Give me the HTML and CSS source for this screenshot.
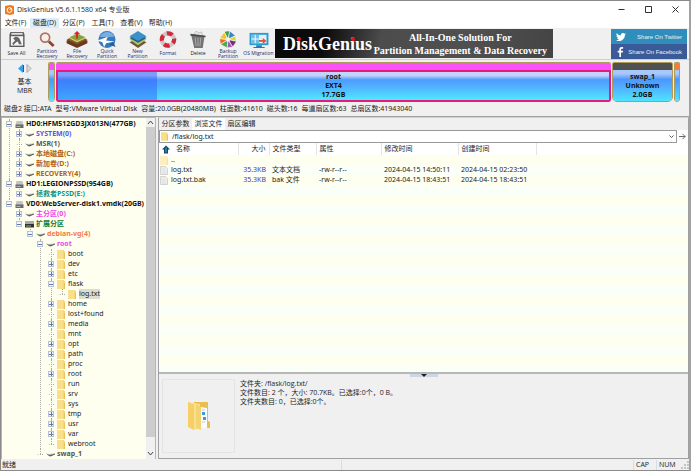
FILE: index.html
```html
<!DOCTYPE html>
<html lang="zh-CN">
<head>
<meta charset="utf-8">
<title>DiskGenius V5.6.1.1580 x64 专业版</title>
<link rel="stylesheet" href="styles.css">
</head>
<body>
<svg class="defs" aria-hidden="true">
  <symbol id="folder" viewBox="0 0 8 9"><path d="M0 0h7v1h1v8H0z" fill="#f3d678"/><path d="M0 0h6v9H0z" fill="#f9df8b"/><path d="M7 3h1v6H7z" fill="#e8c25c"/></symbol>
  <symbol id="drive" viewBox="0 0 9 9"><path d="M1.500 1h6l1 4h-8z" fill="#c4c4c4"/><path d="M.5 4.500h8V8h-8z" fill="#6a6a6a"/><path d="M1.500 6.500h4" stroke="#ccc" stroke-width=".8"/></symbol>
  <symbol id="ext" viewBox="0 0 9 9"><path d="M0 1h9v4H0z" fill="#aaa"/><path d="M0 4h9v3.500H0z" fill="#333"/><path d="M1 6h5" stroke="#9c9" stroke-width=".8"/></symbol>
  <symbol id="part" viewBox="0 0 9 9"><path d="M0 3.500l2.500.5L9 3.500 4.500 5.500z" fill="#b8b8b8"/><path d="M0 3.500l4 1.700 5-1.700v1L4.500 6.500l-1.500-.5z" fill="#5a5a5a"/></symbol>
  <symbol id="page" viewBox="0 0 8 9"><path d="M.5.5h5l2 2v6h-7z" fill="#eee" stroke="#c4c4c4" stroke-width=".7"/><path d="M2 3h3M2 5h4M2 7h4" stroke="#ccc" stroke-width=".5"/></symbol>
</svg>
<div class="window">
  <header class="titlebar">
    <svg class="logo" viewBox="0 0 9 10"><path d="M0 1l5-1 4 1v8l-4 1-5-1z" fill="#f07a22"/><circle cx="4.500" cy="5" r="2.400" fill="none" stroke="#fff"/><path d="M4.500 5l2-2" stroke="#fff"/></svg>
    <h1>DiskGenius V5.6.1.1580 x64 专业版</h1>
    <div class="winbtns">
      <button aria-label="最小化"><svg viewBox="0 0 7 7"><path d="M.5 3.500h6"/></svg></button>
      <button aria-label="最大化"><svg viewBox="0 0 7 7"><path d="M.5.5h6v6h-6z"/></svg></button>
      <button aria-label="关闭"><svg viewBox="0 0 7 7"><path d="M.5.5l6 6M6.500.5l-6 6"/></svg></button>
    </div>
  </header>
  <nav class="menu">
    <button>文件(F)</button><button class="hover">磁盘(D)</button><button>分区(P)</button><button>工具(T)</button><button>查看(V)</button><button>帮助(H)</button>
  </nav>
  <div class="toolbar">
    <button class="tool plain"><svg viewBox="0 0 22 18"><path d="M4 1h14l1 3v13H3V4z" fill="#5c5c5c"/><path d="M5 2h12v2H5z" fill="#ddd"/><path d="M4.500 5.500h13v10h-13z" fill="#f4f4f4"/><path d="M7 8c2-3 6-2 7 1l2 5h-3l-1-3-2 1-3 3-1-2 3-3z" fill="#666"/></svg><span>Save All</span></button>
    <button class="tool"><svg viewBox="0 0 22 18"><circle cx="9" cy="7" r="4.800" fill="#f6eeea" stroke="#ad7562" stroke-width="1.800"/><path d="M13 11l5 5" stroke="#8b4532" stroke-width="3"/></svg><span>Partition<br>Recovery</span></button>
    <button class="tool"><svg viewBox="0 0 22 18"><path d="M0 10l11-4 11 4v3l-11 5-11-5z" fill="#68391c"/><path d="M0 9l11-5 11 5-11 5z" fill="#8a5529"/><path d="M3 8l8-4 9 4-9 4z" fill="#d5d56a"/><path d="M3 6.500L11 3l9 3.500-9 4z" fill="#80a440"/><path d="M11 8V2" stroke="#e1221c" stroke-width="2"/><path d="M7.500 3.500L11 0l3.500 3.500z" fill="#e1221c"/></svg><span>File<br>Recovery</span></button>
    <button class="tool"><svg viewBox="0 0 22 18"><circle cx="11" cy="9" r="9" fill="#3779bd"/><path d="M3 6c4-6 12-7 16 0-5 0-8 1-16 0z" fill="#77afe0"/><path d="M1 10l11-4-2 4 9 1-9 2-2 4-2-5z" fill="#fff"/><path d="M13 14l7 3-2-5z" fill="#285c9e"/></svg><span>Quick<br>Partition</span></button>
    <button class="tool"><svg viewBox="0 0 22 18"><path d="M2 12l9-4 9 4-9 6z" fill="#77523a"/><path d="M2 9l9-4 9 4-9 6z" fill="#a8ca62"/><path d="M2 7.500l9-5 9 5-9 5z" fill="#285b83"/><path d="M2 5.500L11 0l9 5.500-9 5z" fill="#3d91c9"/></svg><span>New<br>Partition</span></button>
    <button class="tool"><svg viewBox="0 0 22 18"><circle cx="11" cy="9" r="6.500" fill="none" stroke="#c8c8cb" stroke-width="4.500"/><circle cx="11" cy="9" r="6.500" fill="none" stroke="#d42a36" stroke-width="4.500" stroke-dasharray="6.100 4.110" stroke-dashoffset="2"/></svg><span>Format</span></button>
    <button class="tool plain"><svg viewBox="0 0 22 18"><path d="M6 4l3-4 3 2 3-1 1 4z" fill="#e5e5e5" stroke="#999" stroke-width=".5"/><path d="M4 5h14l-2 13H7z" fill="#747474"/><path d="M3 3l16 2v1.500L3 5z" fill="#4c4c4c"/><path d="M8 7l1 9M11 7v9M14 7l-1 9" stroke="#bbb" stroke-width=".8"/></svg><span>Delete</span></button>
    <button class="tool"><svg viewBox="0 0 22 18"><g stroke="#fff" stroke-width=".6"><path d="M11 9L7 1a9 9 0 0 1 6-1z" fill="#46a04a"/><path d="M11 9l2-9 6 5z" fill="#3d85c8"/><path d="M11 9l8-4 1 6z" fill="#d7db36"/><path d="M11 9l9 2-4 6z" fill="#71317f"/><path d="M11 9l5 8-6 1z" fill="#a55bb0"/><path d="M11 9l-1 9-7-4z" fill="#4fa956"/><path d="M11 9l-8 5-1-6z" fill="#e46c2e"/><path d="M11 9L2 8l5-7z" fill="#f1c52f"/></g><circle cx="11" cy="9" r="2.300" fill="#f2f2f2"/></svg><span>Backup<br>Partition</span></button>
    <button class="tool"><svg viewBox="0 0 22 18"><path d="M1 2h20v13H1z" fill="#299cd2"/><path d="M3 4h16v9H3z" fill="#dff0f9"/><path d="M3 4h8v9H3z" fill="#6ebee5"/><path d="M7 4v9M3 8.500h8" stroke="#fff"/><path d="M11 9.500h4v-2l4 3-4 3v-2h-4z" fill="#e5502f"/><path d="M8 15h6v2H8zM5 17h12v1H5z" fill="#247fae"/></svg><span>OS Migration</span></button>
    <div class="banner">
      <strong>D<i>i</i>skGen<i>i</i>us</strong>
      <p>All-In-One Solution For<br>Partition Management &amp; Data Recovery</p>
    </div>
    <div class="share">
      <a href="#twitter"><svg viewBox="0 0 24 24"><path fill="#fff" d="M24 4.600a10 10 0 0 1-2.800.8 5 5 0 0 0 2.100-2.700 10 10 0 0 1-3.100 1.200 4.900 4.900 0 0 0-8.400 4.500A14 14 0 0 1 1.700 3.200a4.900 4.900 0 0 0 1.500 6.500 5 5 0 0 1-2.200-.6 4.900 4.900 0 0 0 3.900 4.900 5 5 0 0 1-2.200.1 4.900 4.900 0 0 0 4.600 3.400A10 10 0 0 1 0 19.500 14 14 0 0 0 21.500 7.100 10 10 0 0 0 24 4.600z"/></svg><span>Share On Twitter</span></a>
      <a href="#facebook" class="fb"><svg viewBox="0 0 24 24"><path fill="#fff" d="M8 24V13H4V9h4V6c0-4 2-6 6-6h3v4h-2c-2 0-3 .6-3 2.500V9h5l-.6 4H12v11z"/></svg><span>Share On Facebook</span></a>
    </div>
  </div>
  <section class="disk">
    <div class="mode">
      <svg viewBox="0 0 14 9"><path d="M5 0v9L0 4.500z" fill="#3ba0e8"/><path d="M5.500 1v7" stroke="#1b5f9c"/><path d="M9 .5v8l4-4z" fill="#ddd" stroke="#999" stroke-width=".8"/></svg>
      <span>基本</span><span>MBR</span>
    </div>
    <div class="parts">
      <div class="vol tiny"><i></i><b></b></div>
      <div class="vol root"><i></i><b>root<br>EXT4<br>17.7GB</b></div>
      <div class="vol swap"><i></i><b>swap_1<br>Unknown<br>2.0GB</b></div>
      <div class="vol tiny free"><i></i><b></b></div>
    </div>
  </section>
  <p class="info"><span>磁盘2 接口:ATA</span><span>型号:VMware Virtual Disk</span><span>容量:20.0GB(20480MB)</span><span>柱面数:41610</span><span>磁头数:16</span><span>每道扇区数:63</span><span>总扇区数:41943040</span></p>
  <main class="main">
    <aside class="side">
      <ul class="tree">
        <li><div class="row k"><button class="ex open" aria-label="折叠"></button><svg><use href="#drive"/></svg><span>HD0:HFM512GD3JX013N(477GB)</span></div>
          <ul>
            <li><div class="row blue"><button class="ex" aria-label="展开"></button><svg><use href="#part"/></svg><span>SYSTEM(0)</span></div></li>
            <li><div class="row grey"><em></em><svg><use href="#part"/></svg><span>MSR(1)</span></div></li>
            <li><div class="row brown"><button class="ex" aria-label="展开"></button><svg><use href="#part"/></svg><span>本地磁盘(C:)</span></div></li>
            <li><div class="row brown"><button class="ex" aria-label="展开"></button><svg><use href="#part"/></svg><span>新加卷(D:)</span></div></li>
            <li><div class="row brown"><button class="ex" aria-label="展开"></button><svg><use href="#part"/></svg><span>RECOVERY(4)</span></div></li>
          </ul></li>
        <li><div class="row k"><button class="ex open" aria-label="折叠"></button><svg><use href="#drive"/></svg><span>HD1:LEGIONPSSD(954GB)</span></div>
          <ul><li><div class="row teal"><button class="ex" aria-label="展开"></button><svg><use href="#part"/></svg><span>拯救者PSSD(E:)</span></div></li></ul></li>
        <li><div class="row k"><button class="ex open" aria-label="折叠"></button><svg><use href="#drive"/></svg><span>VD0:WebServer-disk1.vmdk(20GB)</span></div>
          <ul>
            <li><div class="row pink"><button class="ex" aria-label="展开"></button><svg><use href="#part"/></svg><span>主分区(0)</span></div></li>
            <li><div class="row green"><button class="ex open" aria-label="折叠"></button><svg><use href="#ext"/></svg><span>扩展分区</span></div>
              <ul><li><div class="row orange"><button class="ex open" aria-label="折叠"></button><svg><use href="#part"/></svg><span>debian-vg(4)</span></div>
                <ul>
                  <li><div class="row pink"><button class="ex open" aria-label="折叠"></button><svg><use href="#part"/></svg><span>root</span></div>
                    <ul class="dirs">
                      <li><div class="row"><em></em><svg><use href="#folder"/></svg><span>boot</span></div></li>
                      <li><div class="row"><button class="ex" aria-label="展开"></button><svg><use href="#folder"/></svg><span>dev</span></div></li>
                      <li><div class="row"><button class="ex" aria-label="展开"></button><svg><use href="#folder"/></svg><span>etc</span></div></li>
                      <li><div class="row"><button class="ex open" aria-label="折叠"></button><svg><use href="#folder"/></svg><span>flask</span></div>
                        <ul><li><div class="row"><em></em><svg><use href="#folder"/></svg><span class="sel">log.txt</span></div></li></ul></li>
                      <li><div class="row"><button class="ex" aria-label="展开"></button><svg><use href="#folder"/></svg><span>home</span></div></li>
                      <li><div class="row"><em></em><svg><use href="#folder"/></svg><span>lost+found</span></div></li>
                      <li><div class="row"><button class="ex" aria-label="展开"></button><svg><use href="#folder"/></svg><span>media</span></div></li>
                      <li><div class="row"><em></em><svg><use href="#folder"/></svg><span>mnt</span></div></li>
                      <li><div class="row"><button class="ex" aria-label="展开"></button><svg><use href="#folder"/></svg><span>opt</span></div></li>
                      <li><div class="row"><button class="ex" aria-label="展开"></button><svg><use href="#folder"/></svg><span>path</span></div></li>
                      <li><div class="row"><em></em><svg><use href="#folder"/></svg><span>proc</span></div></li>
                      <li><div class="row"><button class="ex" aria-label="展开"></button><svg><use href="#folder"/></svg><span>root</span></div></li>
                      <li><div class="row"><em></em><svg><use href="#folder"/></svg><span>run</span></div></li>
                      <li><div class="row"><em></em><svg><use href="#folder"/></svg><span>srv</span></div></li>
                      <li><div class="row"><em></em><svg><use href="#folder"/></svg><span>sys</span></div></li>
                      <li><div class="row"><button class="ex" aria-label="展开"></button><svg><use href="#folder"/></svg><span>tmp</span></div></li>
                      <li><div class="row"><button class="ex" aria-label="展开"></button><svg><use href="#folder"/></svg><span>usr</span></div></li>
                      <li><div class="row"><button class="ex" aria-label="展开"></button><svg><use href="#folder"/></svg><span>var</span></div></li>
                      <li><div class="row"><em></em><svg><use href="#folder"/></svg><span>webroot</span></div></li>
                    </ul></li>
                  <li><div class="row grey"><em></em><svg><use href="#part"/></svg><span>swap_1</span></div></li>
                </ul></li></ul></li>
          </ul></li>
      </ul>
      <div class="scroll">
        <button aria-label="向上"><svg viewBox="0 0 7 7"><path d="M1 5l2.500-3L6 5"/></svg></button>
        <div class="thumb"></div>
        <button aria-label="向下"><svg viewBox="0 0 7 7"><path d="M1 2l2.500 3L6 2"/></svg></button>
      </div>
    </aside>
    <section class="content">
      <div class="tabs"><button>分区参数</button><button class="on">浏览文件</button><button>扇区编辑</button></div>
      <div class="address">
        <div class="field">
          <svg class="f"><use href="#folder"/></svg>
          <input type="text" aria-label="路径" value="/flask/log.txt">
          <svg class="chev" viewBox="0 0 7 7"><path d="M1.500 2.500l2 2 2-2"/></svg>
        </div>
        <button aria-label="转到"><svg viewBox="0 0 8 8"><path d="M0 4h7M4 1l3 3-3 3"/></svg></button>
      </div>
      <div class="list">
        <table>
          <colgroup><col class="c1"><col class="c2"><col class="c3"><col class="c4"><col class="c5"><col class="c6"><col></colgroup>
          <thead><tr><th><div class="cell"><svg viewBox="0 0 8 8"><path d="M4 0l4 4H6v4H2V4H0z" fill="#14445f"/><path d="M4 2v5" stroke="#49b5e8"/></svg><span class="nm">名称</span></div></th><th class="num">大小</th><th>文件类型</th><th>属性</th><th>修改时间</th><th>创建时间</th><th class="end"></th></tr></thead>
          <tbody>
            <tr><td><div class="cell"><svg class="dim"><use href="#folder"/></svg>..</div></td><td></td><td></td><td></td><td></td><td></td><td></td></tr>
            <tr><td><div class="cell"><svg><use href="#page"/></svg>log.txt</div></td><td class="num">35.3KB</td><td>文本文档</td><td>-rw-r--r--</td><td>2024-04-15 14:50:11</td><td>2024-04-15 02:23:50</td><td></td></tr>
            <tr><td><div class="cell"><svg><use href="#page"/></svg>log.txt.bak</div></td><td class="num">35.3KB</td><td>bak 文件</td><td>-rw-r--r--</td><td>2024-04-15 18:43:51</td><td>2024-04-15 18:43:51</td><td></td></tr>
          </tbody>
        </table>
      </div>
      <div class="details">
        <button class="grip" aria-label="收起"></button>
        <div class="preview"><svg viewBox="0 0 22 28"><path d="M6 0h14v19l2 1v6H6z" fill="#e9bd4e"/><path d="M13 5l6 1v20h-7z" fill="#fbfbfb"/><path d="M14 10h3v3h-3zM15 15h3v3h-3z" fill="#3c9bd8"/><path d="M14 8h3M14 20h3" stroke="#aaa" stroke-width=".6"/><path d="M0 0l12 2v24l-6 2-6-3z" fill="#fbe08b"/><path d="M0 0l6 3v25l-6-3z" fill="#f6cf66"/><path d="M8 2l5 3v23l-5-2z" fill="#f3d474"/></svg></div>
        <p>文件夹: /flask/log.txt/<br>文件数目: 2 个，大小: 70.7KB。已选择:0个，0 B。<br>文件夹数目: 0，已选择:0个。</p>
      </div>
    </section>
  </main>
  <footer class="status"><span class="ready">就绪</span><span class="mid"></span><span class="key">CAP</span><span class="key">NUM</span><svg viewBox="0 0 8 8"><path d="M6 0h2v2H6zM3 3h2v2H3zM6 3h2v2H6zM0 6h2v2H0zM3 6h2v2H3zM6 6h2v2H6z" fill="#c4c4c4"/></svg></footer>
</div>
</body>
</html>
```
FILE: styles.css
```css
* { box-sizing: border-box; }
body { margin: 0; font: 7px/10px "Open Sans", "Noto Sans CJK SC", sans-serif; color: #1c1c1c; background: #f0f0f0; }
button, input { font: inherit; color: inherit; border: 0; padding: 0; background: none; }
h1, p, ul { margin: 0; padding: 0; font: inherit; }
ul { list-style: none; }
svg { display: block; flex: none; }
.defs { position: absolute; width: 0; height: 0; }
.window { height: 100vh; display: flex; flex-direction: column; overflow: hidden; border: 1px solid #8a8a8a; border-right: 2px solid #a2a2a2; white-space: nowrap; }

.titlebar { height: 17px; flex: none; background: #fff; display: flex; align-items: center; padding-left: 4px; gap: 3px; }
.titlebar h1 { flex: 1; }
.logo { width: 9px; height: 10px; }
.winbtns { display: flex; }
.winbtns button { width: 27px; height: 16px; display: grid; place-items: center; }
.winbtns svg { width: 7px; height: 7px; fill: none; stroke: #333; stroke-width: 1; }

.menu { height: 10px; flex: none; background: #fff; display: flex; }
.menu button { min-width: 29px; height: 10px; }
.menu .hover { background: #dcedf9; }

.toolbar { height: 32px; flex: none; display: flex; border-bottom: 1px solid #cfcfcf; padding-top: 1px; }
.tool { width: 30px; display: flex; flex-direction: column; align-items: center; padding-top: 2px; font: 5px/5px "Open Sans", sans-serif; color: #1b2f6b; }
.tool:nth-child(4n+1) { width: 31px; }
.tool svg { width: 22px; height: 17px; }
.tool.plain { color: #222; }
.tool span { flex: 1; display: flex; flex-direction: column; justify-content: center; }
.banner { width: 278px; height: 29px; margin-left: 1px; padding: 0 6px 0 8px; display: flex; align-items: center; justify-content: space-between; color: #fff; background: linear-gradient(100deg, #0b0b0b 18%, #4c4c4c 38%, #505050 70%, #444); font-family: "Liberation Serif", serif; font-weight: bold; }
.banner strong { font-size: 18px; line-height: 28px; }
.banner i { font-style: normal; position: relative; }
.banner i::before { content: ""; position: absolute; left: 1px; top: 3px; width: 4px; height: 4px; border-radius: 2px; background: #e8121a; }
.banner p { font-size: 10px; line-height: 13px; text-align: center; }
.share { width: 76px; margin: 0 2px 0 auto; color: #fff; font-family: "Liberation Sans", sans-serif; }
.share a { height: 15px; padding: 0 5px; display: flex; align-items: center; justify-content: space-between; background: #2f8ebc; color: #e6f2fa; text-decoration: none; font-size: 6px; }
.share .fb { background: #3a5a98; }
.share svg { width: 10px; height: 10px; }

.disk { height: 43px; flex: none; display: flex; padding: 2px 9px 0 0; }
.mode { width: 47px; display: flex; flex-direction: column; align-items: center; padding-top: 2px; line-height: 9px; }
.mode svg { width: 14px; height: 9px; margin-bottom: 4px; }
.parts { flex: 1; height: 40px; display: flex; gap: 1px; min-width: 0; }
.vol { border: 1px solid #b09a5a; border-radius: 2px 2px 5px 5px; overflow: hidden; display: flex; flex-direction: column; }
.vol i { height: 7px; flex: none; background: #fb52f7; }
.vol b { flex: 1; text-align: center; line-height: 9px; padding-top: 2px; color: #111; background: linear-gradient(#a9c8fa 0 12%, #4d97fd 30%, #50a8ff 50%, #4ee4ff); }
.tiny { width: 7px; flex: none; }
.root { flex: 1; border-radius: 2px; border-width: 1px 0 0; }
.root b { border: 2px solid #e8197c; border-radius: 0 0 2px 2px; padding-top: 0; background: linear-gradient(90deg, rgba(40, 90, 250, .45) 18%, transparent 18%), linear-gradient(#c3d4fa 0 12%, #4d9cfd 28%, #50aeff 50%, #4ee9ff); }
.swap { width: 61px; flex: none; }
.swap i { background: #505050; }
.free { width: 6px; }
.free i { background: #f87a3c; }

.info { height: 13px; flex: none; padding: 1px 3px 0; display: flex; gap: 4px; font-family: "Noto Sans", "Noto Sans CJK SC", sans-serif; }

.main { flex: 1; min-height: 0; display: flex; gap: 2px; border-top: 1px solid #a0a0a0; font-family: "Noto Sans", "Noto Sans CJK SC", sans-serif; }
.side { width: 155px; flex: none; display: flex; background: #fffff0; border: 1px solid #b5b5b5; border-width: 1px 1px 0; }
.tree { flex: 1; min-width: 0; overflow: hidden; padding: 1px 0 0 4px; }
.tree ul { padding-left: 10px; }
.tree ul ul { padding-left: 11px; }
.tree ul ul ul { padding-left: 10px; }
.tree ul ul ul ul { padding-left: 11px; }
.tree li { position: relative; }
.tree li::before { content: ""; position: absolute; left: 3px; top: 0; bottom: 0; border-left: 1px dotted #aaa; }
.tree li:last-child::before { bottom: auto; height: 5px; }
.row { position: relative; height: 10px; display: flex; align-items: center; font-weight: bold; }
.row svg { width: 9px; height: 9px; margin: 0 2px 0 3px; }
.dirs .row { font-weight: normal; }
.dirs .row svg { width: 8px; margin-right: 3px; }
.ex { width: 6px; height: 6px; flex: none; border: 1px solid #b9c2d2; background: linear-gradient(#6478b4, #6478b4) center / 4px 1px no-repeat, linear-gradient(#6478b4, #6478b4) center / 1px 4px no-repeat, #f4f7fb; }
.ex.open { background: linear-gradient(#6478b4, #6478b4) center / 4px 1px no-repeat, #f4f7fb; }
.row em { width: 6px; height: 1px; flex: none; border-top: 1px dotted #aaa; border-left: 3px solid transparent; }
.k { color: #111; }
.blue { color: #5454f0; }
.grey { color: #555; }
.brown { color: #b4600c; }
.teal { color: #10988c; }
.pink { color: #f044f0; }
.green { color: #187818; }
.orange { color: #f87848; }
.sel { background: #dedccb; }
.scroll { width: 9px; flex: none; display: flex; flex-direction: column; background: #f0f0f0; }
.scroll button { height: 9px; display: grid; place-items: center; }
.scroll svg { width: 7px; height: 7px; fill: none; stroke: #444; }
.thumb { flex: 0 1 310px; background: #cdcdcd; }
.scroll button:last-child { margin-top: auto; height: 11px; }

.content { flex: 1; min-width: 0; display: flex; flex-direction: column; border: 1px solid #a0a0a0; border-top-color: #d0d0d0; }
.tabs { height: 12px; flex: none; display: flex; }
.tabs button { width: 33px; }
.tabs .on { background: #fff; }
.address { height: 13px; flex: none; display: flex; background: #fff; }
.address .field { flex: 1; display: flex; align-items: center; border: 1px solid #999; padding: 0 1px; gap: 4px; }
.address input { flex: 1; min-width: 0; height: 11px; outline: 0; }
.address svg { width: 7px; height: 9px; fill: none; stroke: #555; stroke-width: 1; }
.address .f { stroke: none; }
.address button { width: 11px; display: grid; place-items: center; }
.list { flex: 1; min-height: 0; background: repeating-linear-gradient(#fffff0 0 10px, #fafff8 10px 20px); background-position: 0 12px; }
table { width: 100%; table-layout: fixed; border-collapse: collapse; }
.c1 { width: 79px; } .c2 { width: 31px; } .c3 { width: 47px; } .c4 { width: 65px; } .c5 { width: 77px; } .c6 { width: 78px; }
th, td { padding: 0 0 0 3px; font-weight: normal; text-align: left; height: 10px; line-height: 10px; }
th { height: 12px; background: #fff; border-right: 1px solid #e4e4e4; }
th.end { border: 0; }
th.num, td.num { text-align: right; padding: 0 3px 0 0; }
td.num { color: #3c3cb4; }
.cell { display: flex; align-items: center; gap: 3px; }
td:first-child { padding-left: 1px; }
.cell svg { width: 8px; height: 9px; }
.nm { padding-left: 3px; }
.dim { opacity: .45; }
.details { position: relative; height: 86px; flex: none; border-top: 2px solid #b8b8b8; padding: 5px 3px; display: flex; gap: 5px; line-height: 9px; font-family: "Open Sans", "Noto Sans CJK SC", sans-serif; }
.grip { position: absolute; left: 251px; top: 0; width: 28px; height: 3px; background: #ccd6e4; }
.grip::after { content: ""; position: absolute; left: 11px; top: 0; border: 3px solid transparent; border-top-color: #222; border-bottom: 0; }
.preview { width: 73px; height: 74px; flex: none; border: 1px solid #e4e4e4; display: grid; place-items: center; }
.preview svg { width: 22px; height: 28px; }

.status { height: 11px; flex: none; display: flex; align-items: center; padding-left: 1px; }
.status .ready { flex: 1; }
.status .mid { width: 292px; height: 10px; border-left: 1px solid #dcdcdc; }
.key { width: 23px; border-left: 1px solid #dcdcdc; padding-left: 2px; }
.status svg { width: 8px; height: 8px; margin-left: 2px; }
```
